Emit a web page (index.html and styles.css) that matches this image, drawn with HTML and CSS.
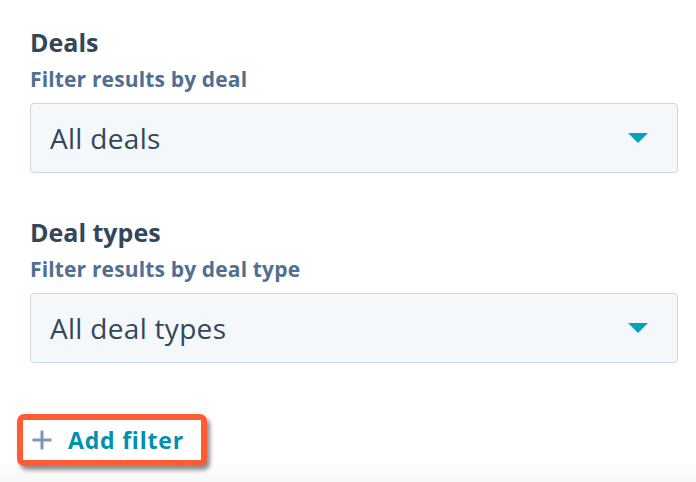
FILE: index.html
```html
<!DOCTYPE html>
<html lang="en">

<head>
  <meta charset="UTF-8">
  <meta name="viewport" content="width=device-width, initial-scale=1.0">
  <title>Report filters</title>
  <link rel="stylesheet" href="styles.css">
</head>

<body>
  <div class="filters">
    <div class="field">
      <div class="field-label">Deals</div>
      <div class="field-help">Filter results by deal</div>
      <div class="select">
        <span class="select-value">All deals</span>
        <span class="caret"></span>
      </div>
    </div>

    <div class="field">
      <div class="field-label">Deal types</div>
      <div class="field-help">Filter results by deal type</div>
      <div class="select">
        <span class="select-value">All deal types</span>
        <span class="caret"></span>
      </div>
    </div>

    <!-- highlighted action -->
    <button class="add-filter" type="button">
      <svg class="plus" width="20" height="20" viewBox="0 0 20 20">
        <path d="M10 0.5v19M0.5 10h19" stroke="#7c98b6" stroke-width="3" fill="none" />
      </svg>
      <span>Add filter</span>
    </button>
  </div>
</body>

</html>
```

FILE: styles.css
```css
body {
  margin: 0;
  font-family: "Open Sans", "Liberation Sans", sans-serif;
  color: #33475b;
  background: linear-gradient(to bottom, #fff 0, #fff 462px, #f7f7f7 482px);
  min-height: 482px;
}

.filters {
  padding: 27px 18px 0 30px;
}

.field {
  margin-bottom: 44px;
}

.field-label {
  font-size: 25px;
  font-weight: 700;
  line-height: 30px;
}

.field-help {
  margin-top: 8px;
  font-size: 21px;
  font-weight: 700;
  line-height: 28px;
  letter-spacing: 0.15px;
  color: #516f90;
}

.select {
  margin-top: 10px;
  height: 70px;
  box-sizing: border-box;
  border: 1px solid #cbd6e2;
  border-radius: 4px;
  background: #f5f8fa;
  display: flex;
  align-items: center;
  justify-content: space-between;
  padding: 0 29px 0 19px;
}

.select-value {
  font-size: 28px;
  letter-spacing: 0.3px;
}

.caret {
  width: 0;
  height: 0;
  border-left: 10px solid transparent;
  border-right: 10px solid transparent;
  border-top: 10px solid #00a4bd;
}

.add-filter {
  margin-left: -13px;
  margin-top: 7px;
  display: inline-flex;
  align-items: center;
  gap: 16px;
  height: 52px;
  box-sizing: border-box;
  padding: 0 17px 0 9px;
  border: 6px solid #ff5c35;
  border-radius: 7px;
  background: #fff;
  box-shadow: 3px 4px 4px rgba(0, 0, 0, 0.45);
  font-family: inherit;
  font-size: 23px;
  font-weight: 700;
  letter-spacing: 0.8px;
  color: #0091ae;
  cursor: pointer;
}

.plus {
  display: block;
}
```
